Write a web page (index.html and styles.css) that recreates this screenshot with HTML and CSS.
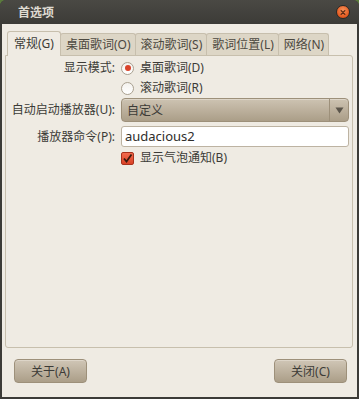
FILE: index.html
```html
<!DOCTYPE html>
<html lang="zh-CN">
<head>
    <meta charset="UTF-8">
    <title>首选项</title>
    <link rel="stylesheet" href="styles.css">
</head>
<body>
    <div class="window">
        <div class="titlebar">
            <span class="title">首选项</span>
            <span class="close">
                <svg width="13" height="13" viewBox="0 0 13 13">
                    <path d="M4.5 4.5 L8.5 8.5 M8.5 4.5 L4.5 8.5" stroke="#5a2a14" stroke-width="1.4" stroke-linecap="round"/>
                </svg>
            </span>
        </div>
        <div class="content">
            <ul class="tabs">
                <li class="active">常规(G)</li>
                <li>桌面歌词(O)</li>
                <li>滚动歌词(S)</li>
                <li>歌词位置(L)</li>
                <li>网络(N)</li>
            </ul>
            <div class="panel">
                <div class="form">
                    <label class="lbl">显示模式:</label>
                    <div class="opt"><span class="radio on"></span>桌面歌词(D)</div>
                    <span></span>
                    <div class="opt"><span class="radio"></span>滚动歌词(R)</div>
                    <label class="lbl combo-lbl">自动启动播放器(U):</label>
                    <div class="combo">
                        <span class="combo-text">自定义</span>
                        <span class="combo-arrow">
                            <svg width="9" height="7" viewBox="0 0 9 7"><path d="M0.5 0.5 L8.5 0.5 L4.5 6.5 Z" fill="#5b554b"/></svg>
                        </span>
                    </div>
                    <label class="lbl entry-lbl">播放器命令(P):</label>
                    <div class="entry">audacious2</div>
                    <span></span>
                    <div class="opt">
                        <span class="check">
                            <svg width="11" height="11" viewBox="0 0 11 11"><path d="M2 5.5 L4.5 8.5 L9.5 1.5" fill="none" stroke="#3a1a0e" stroke-width="1.8"/></svg>
                        </span>显示气泡通知(B)
                    </div>
                </div>
            </div>
            <div class="buttons">
                <button class="btn">关于(A)</button>
                <button class="btn">关闭(C)</button>
            </div>
        </div>
    </div>
</body>
</html>
```

FILE: styles.css
```css
*{
    margin: 0;
    padding: 0;
    box-sizing: border-box;
}
body{
    width: 359px;
    height: 399px;
    background: #5a7a3c;
    font-family: "Noto Sans", "Noto Sans CJK SC", sans-serif;
    font-size: 12px;
    color: #3c3b37;
    overflow: hidden;
}
.window{
    width: 359px;
    height: 399px;
    background: #3c3b37;
    border-radius: 6px 6px 0 0;
    padding: 0 2px 2px 2px;
    display: flex;
    flex-direction: column;
}
.titlebar{
    height: 24px;
    display: flex;
    align-items: center;
    justify-content: space-between;
    padding: 0 9px 0 18px;
    background: linear-gradient(#4a4944, #3c3b37);
    border-radius: 6px 6px 0 0;
    margin: 0 -2px;
}
.title{
    color: #dfdbd2;
    font-weight: bold;
    font-size: 12px;
}
.close{
    width: 14px;
    height: 14px;
    border-radius: 50%;
    background: radial-gradient(circle at 50% 35%, #f7925a, #e4581e 70%, #b8420f);
    border: 1px solid #2a2926;
    display: flex;
    align-items: center;
    justify-content: center;
}
.close svg{
    display: block;
}
.content{
    flex: 1;
    background: #efebe3;
    padding: 7px 4px 0 3px;
    display: flex;
    flex-direction: column;
}
.tabs{
    display: flex;
    list-style: none;
    padding-left: 2px;
    height: 24px;
    align-items: flex-end;
    position: relative;
    z-index: 1;
}
.tabs li{
    height: 22px;
    padding: 0 4px 0 5px;
    line-height: 22px;
    background: #ddd6c6;
    border: 1px solid #c7bfad;
    border-bottom: none;
    border-radius: 3px 3px 0 0;
    color: #4c4840;
    margin-right: -1px;
}
.tabs li.active{
    height: 25px;
    line-height: 24px;
    background: #efebe3;
    color: #3c3b37;
    padding: 0 6px;
    margin-bottom: -1px;
}
.panel{
    height: 293px;
    border: 1px solid #c7bfad;
    border-radius: 0 3px 3px 3px;
    padding: 2px 3px 0 0;
}
.form{
    display: grid;
    grid-template-columns: 109px 1fr;
    grid-template-rows: 20px 20px 24px 25px 22px;
    column-gap: 6px;
}
.lbl{
    text-align: right;
    line-height: 20px;
    white-space: nowrap;
}
.combo-lbl{
    line-height: 24px;
}
.entry-lbl{
    line-height: 21px;
    padding-top: 4px;
}
.opt{
    display: flex;
    align-items: center;
    gap: 6px;
    line-height: 20px;
}
.radio{
    width: 13px;
    height: 13px;
    border-radius: 50%;
    border: 1px solid #a9a090;
    background: linear-gradient(#f4f2ee, #fff);
    position: relative;
}
.radio.on::after{
    content: "";
    position: absolute;
    left: 2.5px;
    top: 2.5px;
    width: 6px;
    height: 6px;
    border-radius: 50%;
    background: #d9432a;
}
.combo{
    height: 24px;
    border: 1px solid #9d907a;
    border-radius: 4px;
    background: linear-gradient(#cdc3b2, #ab9e88);
    display: flex;
    align-items: center;
    box-shadow: inset 0 1px 0 #ddd5c8;
}
.combo-text{
    flex: 1;
    padding-left: 5px;
}
.combo-arrow{
    width: 19px;
    height: 100%;
    border-left: 1px solid #9d907a;
    display: flex;
    align-items: center;
    justify-content: center;
}
.entry{
    height: 21px;
    margin-top: 4px;
    border: 1px solid #bdb3a2;
    border-radius: 3px;
    background: #fff;
    font-size: 13px;
    line-height: 19px;
    padding-left: 3px;
    color: #2f2e2b;
}
.check{
    width: 13px;
    height: 13px;
    border-radius: 2px;
    border: 1px solid #a8311c;
    background: linear-gradient(#f26b4e, #d94226);
    display: flex;
    align-items: center;
    justify-content: center;
}
.buttons{
    display: flex;
    justify-content: space-between;
    padding: 11px 6px 0 9px;
}
.btn{
    width: 73px;
    height: 24px;
    font-family: inherit;
    font-size: 12px;
    color: #3c3b37;
    border: 1px solid #9d907a;
    border-radius: 4px;
    background: linear-gradient(#d0c6b6, #ab9e88);
    box-shadow: inset 0 1px 0 #ddd5c8;
}
```
